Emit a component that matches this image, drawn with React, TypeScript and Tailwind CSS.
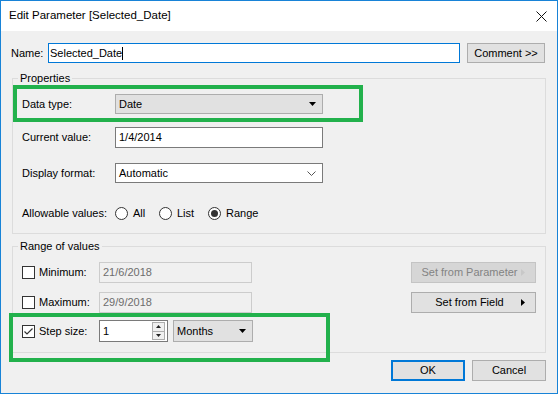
import React from "react";

const font = { fontFamily: '"Segoe UI", "Liberation Sans", Arial, sans-serif' };

function Combo({ text, width, flat }: { text: string; width: string; flat?: boolean }) {
  return (
    <div
      className={`flex h-full items-center justify-between pl-[3px] pr-[6px] ${width} ${
        flat ? "border border-[#7a7a7a] bg-white" : "border border-[#adadad] bg-[#e1e1e1]"
      }`}
    >
      <span>{text}</span>
      {flat ? (
        <svg width="9" height="5" viewBox="0 0 9 5">
          <path d="M0.5 0.5 L4.5 4.5 L8.5 0.5" fill="none" stroke="#555" strokeWidth="1" />
        </svg>
      ) : (
        <svg width="7" height="4" viewBox="0 0 7 4">
          <path d="M0 0 H7 L3.5 4 Z" fill="#000" />
        </svg>
      )}
    </div>
  );
}

function Radio({ label, checked, width }: { label: string; checked?: boolean; width: string }) {
  return (
    <div className={`flex items-center gap-[5px] ${width}`}>
      <span className="flex h-[13px] w-[13px] items-center justify-center rounded-full border border-[#333] bg-white">
        {checked && <span className="h-[7px] w-[7px] rounded-full bg-[#333]" />}
      </span>
      <span>{label}</span>
    </div>
  );
}

function Check({ checked }: { checked?: boolean }) {
  return (
    <span className="flex h-[13px] w-[13px] items-center justify-center border border-[#333] bg-white">
      {checked && (
        <svg width="11" height="11" viewBox="0 0 11 11">
          <path d="M1.5 5.5 L4 8 L9.5 2.5" fill="none" stroke="#333" strokeWidth="1.2" />
        </svg>
      )}
    </span>
  );
}

function Button({ children, width, disabled, primary }: { children: React.ReactNode; width: string; disabled?: boolean; primary?: boolean }) {
  return (
    <div
      className={`flex h-full items-center justify-center ${width} ${
        disabled
          ? "border border-[#c4c4c4] bg-[#d6d6d6] text-[#838383]"
          : primary
          ? "border-2 border-[#0078d7] bg-[#e1e1e1]"
          : "border border-[#adadad] bg-[#e1e1e1]"
      }`}
    >
      {children}
    </div>
  );
}

function SetButton({ text, disabled }: { text: string; disabled?: boolean }) {
  return (
    <div
      className={`relative flex h-full w-[125px] items-center justify-center ${
        disabled ? "border border-[#c4c4c4] bg-[#d6d6d6] text-[#838383]" : "border border-[#adadad] bg-[#e1e1e1]"
      }`}
    >
      <span className="pr-[8px]">{text}</span>
      <svg className="absolute right-[10px]" width="4" height="7" viewBox="0 0 4 7">
        <path d="M0 0 L4 3.5 L0 7 Z" fill={disabled ? "#c8c8c8" : "#000"} />
      </svg>
    </div>
  );
}

export default function App() {
  return (
    <div
      style={font}
      className="relative flex h-[394px] w-[558px] flex-col border border-[#1883d7] bg-[#f0f0f0] text-[11px] text-black"
    >
      {/* title bar */}
      <div className="flex h-[30px] items-center justify-between bg-white pl-[8px] pr-[10px]">
        <span className="text-[11.5px]">Edit Parameter [Selected_Date]</span>
        <svg width="11" height="11" viewBox="0 0 11 11">
          <path d="M0.5 0.5 L10.5 10.5 M10.5 0.5 L0.5 10.5" stroke="#111" strokeWidth="1" />
        </svg>
      </div>

      {/* name row */}
      <div className="mt-[12px] flex h-[20px] items-center pl-[10px] pr-[11px]">
        <span className="w-[37px]">Name:</span>
        <div className="flex h-full w-[412px] items-center border border-[#0078d7] bg-white pl-[1px]">
          <span>Selected_Date</span>
          <span className="h-[13px] w-px bg-black" />
        </div>
        <div className="ml-[7px] h-full">
          <Button width="w-[78px]">Comment &gt;&gt;</Button>
        </div>
      </div>

      {/* properties */}
      <div className="relative ml-[11px] mt-[15px] w-[534px] border border-[#dcdcdc] pb-[10px] pl-[9px]">
        <span className="absolute -top-[9px] left-[5px] bg-[#f0f0f0] px-[2px]">Properties</span>
        <div className="mt-[15px] flex h-[20px] items-center">
          <span className="w-[93px]">Data type:</span>
          <Combo text="Date" width="w-[208px]" />
        </div>
        <div className="mt-[13px] flex h-[21px] items-center">
          <span className="w-[93px]">Current value:</span>
          <div className="flex h-full w-[208px] items-center border border-[#7a7a7a] bg-white pl-[3px]">1/4/2014</div>
        </div>
        <div className="mt-[15px] flex h-[20px] items-center">
          <span className="w-[93px]">Display format:</span>
          <Combo text="Automatic" width="w-[208px]" flat />
        </div>
        <div className="mt-[20px] flex h-[20px] items-center">
          <span className="w-[93px]">Allowable values:</span>
          <Radio label="All" width="w-[44px]" />
          <Radio label="List" width="w-[49px]" />
          <Radio label="Range" checked width="w-[70px]" />
        </div>
      </div>

      {/* range of values */}
      <div className="relative ml-[11px] mt-[12px] w-[534px] border border-[#dcdcdc] pb-[10px] pl-[9px] pr-[9px]">
        <span className="absolute -top-[9px] left-[5px] bg-[#f0f0f0] px-[2px]">Range of values</span>
        <div className="mt-[15px] flex h-[21px] items-center">
          <Check />
          <span className="ml-[4px] w-[60px]">Minimum:</span>
          <div className="flex h-full w-[153px] items-center border border-[#cccccc] pl-[3px] text-[#6d6d6d]">21/6/2018</div>
          <div className="ml-auto h-full">
            <SetButton text="Set from Parameter" disabled />
          </div>
        </div>
        <div className="mt-[9px] flex h-[21px] items-center">
          <Check />
          <span className="ml-[4px] w-[60px]">Maximum:</span>
          <div className="flex h-full w-[153px] items-center border border-[#cccccc] pl-[3px] text-[#6d6d6d]">29/9/2018</div>
          <div className="ml-auto h-full">
            <SetButton text="Set from Field" />
          </div>
        </div>
        <div className="mt-[7px] flex h-[22px] items-center">
          <Check checked />
          <span className="ml-[4px] w-[60px]">Step size:</span>
          <div className="flex h-full w-[69px] items-center border border-[#7a7a7a] bg-white pl-[3px] pr-[2px]">
            <span className="flex-1">1</span>
            <div className="flex h-[18px] w-[13px] flex-col border border-[#adadad] bg-[#f0f0f0]">
              <div className="flex flex-1 items-center justify-center border-b border-[#adadad]">
                <svg width="5" height="3" viewBox="0 0 5 3">
                  <path d="M0 3 L2.5 0 L5 3 Z" fill="#222" />
                </svg>
              </div>
              <div className="flex flex-1 items-center justify-center">
                <svg width="5" height="3" viewBox="0 0 5 3">
                  <path d="M0 0 H5 L2.5 3 Z" fill="#222" />
                </svg>
              </div>
            </div>
          </div>
          <div className="ml-[5px] h-full">
            <Combo text="Months" width="w-[80px]" />
          </div>
        </div>
      </div>

      {/* dialog buttons */}
      <div className="mt-[7px] flex h-[21px] justify-end gap-[7px] pr-[11px]">
        <Button width="w-[74px]" primary>OK</Button>
        <Button width="w-[74px]">Cancel</Button>
      </div>

      {/* green highlight boxes */}
      <div className="pointer-events-none absolute left-[12px] top-[84px] h-[37px] w-[350px] border-4 border-[#22b14c]" />
      <div className="pointer-events-none absolute left-[8px] top-[312px] h-[49px] w-[321px] border-4 border-[#22b14c]" />
    </div>
  );
}
